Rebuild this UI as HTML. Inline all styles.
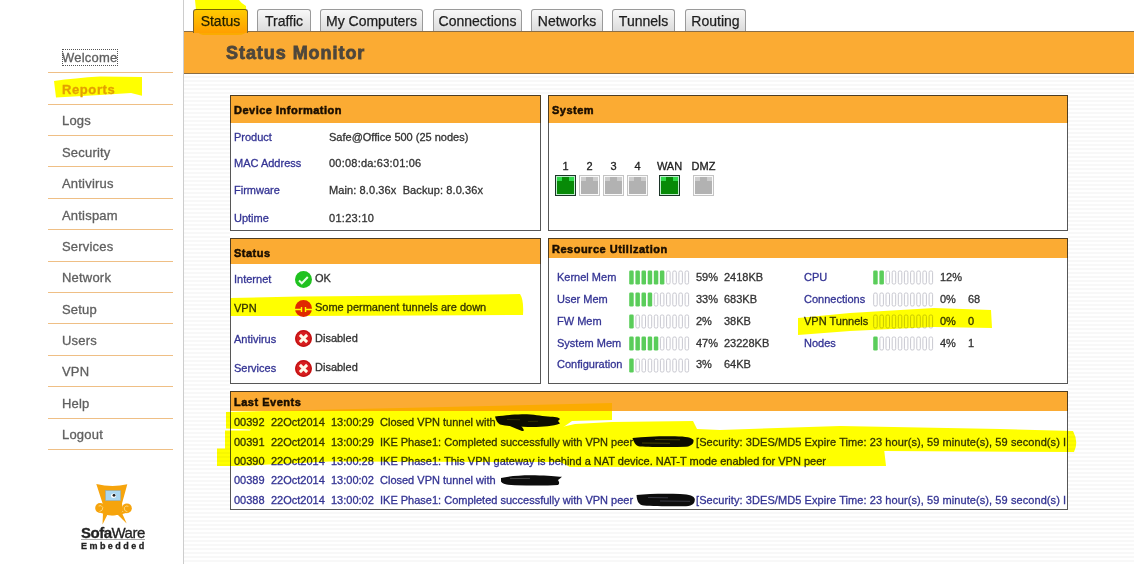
<!DOCTYPE html>
<html><head><meta charset="utf-8">
<style>
*{margin:0;padding:0;box-sizing:border-box}
html,body{width:1134px;height:573px;overflow:hidden;background:#fff;font-family:"Liberation Sans",sans-serif}
.a{position:absolute;white-space:pre;line-height:13px}
.tab{position:absolute;top:9px;height:22px;border:1px solid #9a9a9a;border-bottom:none;border-radius:3px 3px 0 0;background:linear-gradient(#f8f8f8,#dcdcdc)}
.nav{position:absolute;left:62px;font-size:13px;color:#606060;line-height:15px;white-space:pre;letter-spacing:0.2px;-webkit-text-stroke:0.3px currentColor}
.hl{position:absolute;left:48px;width:125px;height:1px;background:#efbf85}
.box{position:absolute;border:1px solid #575757;background:#fff}
.hd{position:absolute;background:#fbab33;box-sizing:border-box}
.h{position:absolute;white-space:pre;font-weight:bold;font-size:11px;color:#1a0e00;line-height:13px;letter-spacing:0.5px;-webkit-text-stroke:0.5px #1a0e00}
.lb{position:absolute;white-space:pre;font-size:11px;color:#343494;line-height:13px;-webkit-text-stroke:0.3px currentColor}
.vl{position:absolute;white-space:pre;font-size:11px;color:#333333;line-height:13px;-webkit-text-stroke:0.3px currentColor}
.mul{position:absolute;left:0;top:0;mix-blend-mode:multiply}
</style></head><body>

<div style="position:absolute;left:183px;top:0;width:1px;height:564px;background:#cdcdcd"></div>
<div style="position:absolute;left:184px;top:74px;width:950px;height:490px;background:repeating-linear-gradient(to bottom,#fff 0px,#fff 2px,#f8f8f8 2px,#f8f8f8 4px)"></div>
<div style="position:absolute;left:184px;top:31px;width:950px;height:43px;background:#fbab33;border-top:1px solid #8a6d45;border-bottom:1px solid #8a6d45"></div>
<div class="tab" style="left:193px;width:55px;height:24px;border-color:#7a6530;background:linear-gradient(#ffcb00,#ff9f00)"></div>
<div class="a" style="left:193px;top:14px;width:55px;text-align:center;font-size:14px;line-height:14px;color:#1e1e1e;-webkit-text-stroke:0.25px currentColor">Status</div>
<div class="tab" style="left:257px;width:54px"></div>
<div class="a" style="left:257px;top:14px;width:54px;text-align:center;font-size:14px;line-height:14px;color:#1e1e1e;-webkit-text-stroke:0.25px currentColor">Traffic</div>
<div class="tab" style="left:320px;width:103px"></div>
<div class="a" style="left:320px;top:14px;width:103px;text-align:center;font-size:14px;line-height:14px;color:#1e1e1e;-webkit-text-stroke:0.25px currentColor">My Computers</div>
<div class="tab" style="left:433px;width:89px"></div>
<div class="a" style="left:433px;top:14px;width:89px;text-align:center;font-size:14px;line-height:14px;color:#1e1e1e;-webkit-text-stroke:0.25px currentColor">Connections</div>
<div class="tab" style="left:531px;width:72px"></div>
<div class="a" style="left:531px;top:14px;width:72px;text-align:center;font-size:14px;line-height:14px;color:#1e1e1e;-webkit-text-stroke:0.25px currentColor">Networks</div>
<div class="tab" style="left:612px;width:63px"></div>
<div class="a" style="left:612px;top:14px;width:63px;text-align:center;font-size:14px;line-height:14px;color:#1e1e1e;-webkit-text-stroke:0.25px currentColor">Tunnels</div>
<div class="tab" style="left:685px;width:61px"></div>
<div class="a" style="left:685px;top:14px;width:61px;text-align:center;font-size:14px;line-height:14px;color:#1e1e1e;-webkit-text-stroke:0.25px currentColor">Routing</div>
<div class="a" style="left:226px;top:44px;font-size:18px;line-height:18px;font-weight:bold;color:#4e473c;letter-spacing:0.95px;-webkit-text-stroke:0.8px #4e473c">Status Monitor</div>
<div class="nav" style="top:50px;">Welcome</div>
<div class="hl" style="top:72px"></div>
<div class="nav" style="top:82px;font-weight:bold;color:#e3a000;letter-spacing:0.6px;">Reports</div>
<div class="hl" style="top:104px"></div>
<div class="nav" style="top:113px;">Logs</div>
<div class="hl" style="top:135px"></div>
<div class="nav" style="top:145px;">Security</div>
<div class="hl" style="top:166px"></div>
<div class="nav" style="top:176px;">Antivirus</div>
<div class="hl" style="top:198px"></div>
<div class="nav" style="top:208px;">Antispam</div>
<div class="hl" style="top:229px"></div>
<div class="nav" style="top:239px;">Services</div>
<div class="hl" style="top:261px"></div>
<div class="nav" style="top:270px;">Network</div>
<div class="hl" style="top:292px"></div>
<div class="nav" style="top:302px;">Setup</div>
<div class="hl" style="top:323px"></div>
<div class="nav" style="top:333px;">Users</div>
<div class="hl" style="top:355px"></div>
<div class="nav" style="top:364px;">VPN</div>
<div class="hl" style="top:386px"></div>
<div class="nav" style="top:396px;">Help</div>
<div class="hl" style="top:418px"></div>
<div class="nav" style="top:427px;">Logout</div>
<div class="hl" style="top:449px"></div>
<div style="position:absolute;left:62px;top:49px;width:56px;height:17px;border:1px dotted #555"></div>
<svg style="position:absolute;left:80px;top:482px" width="68" height="70" viewBox="0 0 68 70">
<path d="M16.3 1.9 Q31.8 6 47.3 2.3 L42 21.5 L43 29 Q39 33.5 32 33.5 Q25 33.5 21.5 29 L22.6 21.5 Z" fill="#f6a40c"/>
<circle cx="20.1" cy="26" r="4.9" fill="#f6a40c"/>
<circle cx="46.9" cy="26.3" r="4.9" fill="#f6a40c"/>
<path d="M20 28 Q33 35 47 28 L46 31 Q33 35.5 21 31 Z" fill="#f6a40c"/>
<path d="M18.6 24 Q21.5 22.5 22.8 25.5 Q23 29 19.5 29.5" stroke="#ffd67a" stroke-width="1" fill="none"/>
<path d="M48.4 24.3 Q45.5 22.8 44.2 25.8 Q44 29.3 47.5 29.8" stroke="#ffd67a" stroke-width="1" fill="none"/>
<path d="M23 31 L27.5 32.5 L22.5 42.5 Z" fill="#f6a40c"/>
<path d="M37.5 32.5 L42 31 L46.7 41.5 Z" fill="#f6a40c"/>
<rect x="25.5" y="8.6" width="15.1" height="10" fill="#a9d6ef" stroke="#8aa8b8" stroke-width="0.5"/>
<ellipse cx="33.5" cy="13.7" rx="2.6" ry="2.2" fill="#fff"/>
<circle cx="34" cy="13.3" r="1.4" fill="#1a1a1a"/>
</svg>
<div class="a" style="left:81px;top:525px;font-size:15px;line-height:15px;font-weight:bold;color:#222;letter-spacing:-0.5px;-webkit-text-stroke:0.3px #222">Sofa<span style="font-weight:normal">Ware</span></div>
<div style="position:absolute;left:81px;top:539px;width:64px;height:1px;background:#aaa"></div>
<div class="a" style="left:81px;top:542px;font-size:9px;line-height:9px;font-weight:bold;color:#222;letter-spacing:2.45px;-webkit-text-stroke:0.3px #222">Embedded</div>
<div style="position:absolute;left:230px;top:95px;width:838px;height:415px;background:#fff"></div>
<div class="box" style="left:230px;top:95px;width:311px;height:136px"></div>
<div class="hd" style="left:230px;top:95px;width:311px;height:28px;border:1px solid #4e3d22;border-bottom:none"></div>
<div class="h" style="left:234px;top:104px">Device Information</div>
<div class="box" style="left:548px;top:95px;width:520px;height:136px"></div>
<div class="hd" style="left:548px;top:95px;width:520px;height:28px;border:1px solid #4e3d22;border-bottom:none"></div>
<div class="h" style="left:552px;top:104px">System</div>
<div class="box" style="left:230px;top:238px;width:311px;height:146px"></div>
<div class="hd" style="left:230px;top:238px;width:311px;height:26px;border:1px solid #4e3d22;border-bottom:none"></div>
<div class="h" style="left:234px;top:247px">Status</div>
<div class="box" style="left:548px;top:238px;width:520px;height:146px"></div>
<div class="hd" style="left:548px;top:238px;width:520px;height:20px;border:1px solid #4e3d22;border-bottom:none"></div>
<div class="h" style="left:552px;top:243px">Resource Utilization</div>
<div class="box" style="left:230px;top:391px;width:838px;height:119px"></div>
<div class="hd" style="left:230px;top:391px;width:838px;height:20px;border:1px solid #4e3d22;border-bottom:none"></div>
<div class="h" style="left:234px;top:396px">Last Events</div>
<div class="lb" style="left:234px;top:131px">Product</div>
<div class="vl" style="left:329px;top:131px;letter-spacing:0.00px">Safe@Office 500 (25 nodes)</div>
<div class="lb" style="left:234px;top:157px">MAC Address</div>
<div class="vl" style="left:329px;top:157px;letter-spacing:0.22px">00:08:da:63:01:06</div>
<div class="lb" style="left:234px;top:184px">Firmware</div>
<div class="vl" style="left:329px;top:184px;letter-spacing:0.10px">Main: 8.0.36x  Backup: 8.0.36x</div>
<div class="lb" style="left:234px;top:212px">Uptime</div>
<div class="vl" style="left:329px;top:212px;letter-spacing:0.30px">01:23:10</div>
<svg style="position:absolute;left:555px;top:175px" width="21" height="21"><rect x="0.5" y="0.5" width="20" height="20" fill="#bfeecc" stroke="#1c3428"/><rect x="2" y="2" width="17" height="17" fill="#078a07"/><rect x="2" y="2" width="5" height="4" fill="#2fd84a"/><rect x="14" y="2" width="5" height="4" fill="#2fd84a"/></svg>
<div class="vl" style="left:555px;top:160px;width:21px;text-align:center;color:#222">1</div>
<svg style="position:absolute;left:579px;top:175px" width="21" height="21"><rect x="0.5" y="0.5" width="20" height="20" fill="#fafafa" stroke="#c4c4c4"/><rect x="2" y="2" width="17" height="17" fill="#b2b2b2"/><rect x="2" y="2" width="5" height="4" fill="#cdcdcd"/><rect x="14" y="2" width="5" height="4" fill="#cdcdcd"/></svg>
<div class="vl" style="left:579px;top:160px;width:21px;text-align:center;color:#222">2</div>
<svg style="position:absolute;left:603px;top:175px" width="21" height="21"><rect x="0.5" y="0.5" width="20" height="20" fill="#fafafa" stroke="#c4c4c4"/><rect x="2" y="2" width="17" height="17" fill="#b2b2b2"/><rect x="2" y="2" width="5" height="4" fill="#cdcdcd"/><rect x="14" y="2" width="5" height="4" fill="#cdcdcd"/></svg>
<div class="vl" style="left:603px;top:160px;width:21px;text-align:center;color:#222">3</div>
<svg style="position:absolute;left:627px;top:175px" width="21" height="21"><rect x="0.5" y="0.5" width="20" height="20" fill="#fafafa" stroke="#c4c4c4"/><rect x="2" y="2" width="17" height="17" fill="#b2b2b2"/><rect x="2" y="2" width="5" height="4" fill="#cdcdcd"/><rect x="14" y="2" width="5" height="4" fill="#cdcdcd"/></svg>
<div class="vl" style="left:627px;top:160px;width:21px;text-align:center;color:#222">4</div>
<svg style="position:absolute;left:659px;top:175px" width="21" height="21"><rect x="0.5" y="0.5" width="20" height="20" fill="#bfeecc" stroke="#1c3428"/><rect x="2" y="2" width="17" height="17" fill="#078a07"/><rect x="2" y="2" width="5" height="4" fill="#2fd84a"/><rect x="14" y="2" width="5" height="4" fill="#2fd84a"/></svg>
<div class="vl" style="left:659px;top:160px;width:21px;text-align:center;color:#222;display:flex;justify-content:center;overflow:visible"><span>WAN</span></div>
<svg style="position:absolute;left:693px;top:175px" width="21" height="21"><rect x="0.5" y="0.5" width="20" height="20" fill="#fafafa" stroke="#c4c4c4"/><rect x="2" y="2" width="17" height="17" fill="#b2b2b2"/><rect x="2" y="2" width="5" height="4" fill="#cdcdcd"/><rect x="14" y="2" width="5" height="4" fill="#cdcdcd"/></svg>
<div class="vl" style="left:693px;top:160px;width:21px;text-align:center;color:#222;display:flex;justify-content:center;overflow:visible"><span>DMZ</span></div>
<div class="lb" style="left:234px;top:273px">Internet</div>
<svg style="position:absolute;left:295px;top:271px" width="18" height="18"><circle cx="8.5" cy="8.5" r="8.5" fill="#1fc21f"/><path d="M4 9.5 L6.8 12.3 L12.8 6" stroke="#e8ffe8" stroke-width="2" fill="none"/></svg>
<div class="vl" style="left:315px;top:272px">OK</div>
<div class="lb" style="left:234px;top:302px">VPN</div>
<svg style="position:absolute;left:295px;top:300px" width="18" height="18"><circle cx="8.5" cy="8.5" r="8.5" fill="#e02808"/><path d="M0 9.5 H6.5 M10.5 9.5 H17 M6.5 7 V12 M10.5 7 V12" stroke="#fff" stroke-width="1.4" fill="none"/></svg>
<div class="vl" style="left:315px;top:301px">Some permanent tunnels are down</div>
<div class="lb" style="left:234px;top:333px">Antivirus</div>
<svg style="position:absolute;left:295px;top:330px" width="18" height="18"><circle cx="8.5" cy="8.5" r="8.5" fill="#d81e1e"/><circle cx="8.5" cy="8.5" r="7.6" fill="none" stroke="#b81010" stroke-width="1"/><path d="M4.9 4.9 L12.1 12.1 M12.1 4.9 L4.9 12.1" stroke="#fffbe8" stroke-width="2.9" fill="none"/></svg>
<div class="vl" style="left:315px;top:332px">Disabled</div>
<div class="lb" style="left:234px;top:362px">Services</div>
<svg style="position:absolute;left:295px;top:360px" width="18" height="18"><circle cx="8.5" cy="8.5" r="8.5" fill="#d81e1e"/><circle cx="8.5" cy="8.5" r="7.6" fill="none" stroke="#b81010" stroke-width="1"/><path d="M4.9 4.9 L12.1 12.1 M12.1 4.9 L4.9 12.1" stroke="#fffbe8" stroke-width="2.9" fill="none"/></svg>
<div class="vl" style="left:315px;top:361px">Disabled</div>
<div class="lb" style="left:557px;top:271px">Kernel Mem</div>
<svg style="position:absolute;left:629px;top:270px" width="62" height="15"><rect x="0.2" y="0.5" width="4.5" height="14" rx="1.3" fill="#5acd5a"/><rect x="6.4" y="0.5" width="4.5" height="14" rx="1.3" fill="#5acd5a"/><rect x="12.5" y="0.5" width="4.5" height="14" rx="1.3" fill="#5acd5a"/><rect x="18.7" y="0.5" width="4.5" height="14" rx="1.3" fill="#5acd5a"/><rect x="24.8" y="0.5" width="4.5" height="14" rx="1.3" fill="#5acd5a"/><rect x="30.9" y="0.5" width="4.5" height="14" rx="1.3" fill="#5acd5a"/><rect x="37.6" y="1" width="3.5" height="13" rx="1.3" fill="#fff" stroke="#c8c8d0" stroke-width="1"/><rect x="43.8" y="1" width="3.5" height="13" rx="1.3" fill="#fff" stroke="#c8c8d0" stroke-width="1"/><rect x="49.9" y="1" width="3.5" height="13" rx="1.3" fill="#fff" stroke="#c8c8d0" stroke-width="1"/><rect x="56.1" y="1" width="3.5" height="13" rx="1.3" fill="#fff" stroke="#c8c8d0" stroke-width="1"/></svg>
<div class="vl" style="left:696px;top:271px">59%</div>
<div class="vl" style="left:724px;top:271px">2418KB</div>
<div class="lb" style="left:804px;top:271px">CPU</div>
<svg style="position:absolute;left:873px;top:270px" width="62" height="15"><rect x="0.2" y="0.5" width="4.5" height="14" rx="1.3" fill="#5acd5a"/><rect x="6.4" y="0.5" width="4.5" height="14" rx="1.3" fill="#5acd5a"/><rect x="13.0" y="1" width="3.5" height="13" rx="1.3" fill="#fff" stroke="#c8c8d0" stroke-width="1"/><rect x="19.2" y="1" width="3.5" height="13" rx="1.3" fill="#fff" stroke="#c8c8d0" stroke-width="1"/><rect x="25.3" y="1" width="3.5" height="13" rx="1.3" fill="#fff" stroke="#c8c8d0" stroke-width="1"/><rect x="31.4" y="1" width="3.5" height="13" rx="1.3" fill="#fff" stroke="#c8c8d0" stroke-width="1"/><rect x="37.6" y="1" width="3.5" height="13" rx="1.3" fill="#fff" stroke="#c8c8d0" stroke-width="1"/><rect x="43.8" y="1" width="3.5" height="13" rx="1.3" fill="#fff" stroke="#c8c8d0" stroke-width="1"/><rect x="49.9" y="1" width="3.5" height="13" rx="1.3" fill="#fff" stroke="#c8c8d0" stroke-width="1"/><rect x="56.1" y="1" width="3.5" height="13" rx="1.3" fill="#fff" stroke="#c8c8d0" stroke-width="1"/></svg>
<div class="vl" style="left:940px;top:271px">12%</div>
<div class="lb" style="left:557px;top:293px">User Mem</div>
<svg style="position:absolute;left:629px;top:292px" width="62" height="15"><rect x="0.2" y="0.5" width="4.5" height="14" rx="1.3" fill="#5acd5a"/><rect x="6.4" y="0.5" width="4.5" height="14" rx="1.3" fill="#5acd5a"/><rect x="12.5" y="0.5" width="4.5" height="14" rx="1.3" fill="#5acd5a"/><rect x="18.7" y="0.5" width="4.5" height="14" rx="1.3" fill="#5acd5a"/><rect x="25.3" y="1" width="3.5" height="13" rx="1.3" fill="#fff" stroke="#c8c8d0" stroke-width="1"/><rect x="31.4" y="1" width="3.5" height="13" rx="1.3" fill="#fff" stroke="#c8c8d0" stroke-width="1"/><rect x="37.6" y="1" width="3.5" height="13" rx="1.3" fill="#fff" stroke="#c8c8d0" stroke-width="1"/><rect x="43.8" y="1" width="3.5" height="13" rx="1.3" fill="#fff" stroke="#c8c8d0" stroke-width="1"/><rect x="49.9" y="1" width="3.5" height="13" rx="1.3" fill="#fff" stroke="#c8c8d0" stroke-width="1"/><rect x="56.1" y="1" width="3.5" height="13" rx="1.3" fill="#fff" stroke="#c8c8d0" stroke-width="1"/></svg>
<div class="vl" style="left:696px;top:293px">33%</div>
<div class="vl" style="left:724px;top:293px">683KB</div>
<div class="lb" style="left:804px;top:293px">Connections</div>
<svg style="position:absolute;left:873px;top:292px" width="62" height="15"><rect x="0.7" y="1" width="3.5" height="13" rx="1.3" fill="#fff" stroke="#c8c8d0" stroke-width="1"/><rect x="6.9" y="1" width="3.5" height="13" rx="1.3" fill="#fff" stroke="#c8c8d0" stroke-width="1"/><rect x="13.0" y="1" width="3.5" height="13" rx="1.3" fill="#fff" stroke="#c8c8d0" stroke-width="1"/><rect x="19.2" y="1" width="3.5" height="13" rx="1.3" fill="#fff" stroke="#c8c8d0" stroke-width="1"/><rect x="25.3" y="1" width="3.5" height="13" rx="1.3" fill="#fff" stroke="#c8c8d0" stroke-width="1"/><rect x="31.4" y="1" width="3.5" height="13" rx="1.3" fill="#fff" stroke="#c8c8d0" stroke-width="1"/><rect x="37.6" y="1" width="3.5" height="13" rx="1.3" fill="#fff" stroke="#c8c8d0" stroke-width="1"/><rect x="43.8" y="1" width="3.5" height="13" rx="1.3" fill="#fff" stroke="#c8c8d0" stroke-width="1"/><rect x="49.9" y="1" width="3.5" height="13" rx="1.3" fill="#fff" stroke="#c8c8d0" stroke-width="1"/><rect x="56.1" y="1" width="3.5" height="13" rx="1.3" fill="#fff" stroke="#c8c8d0" stroke-width="1"/></svg>
<div class="vl" style="left:940px;top:293px">0%</div>
<div class="vl" style="left:968px;top:293px">68</div>
<div class="lb" style="left:557px;top:315px">FW Mem</div>
<svg style="position:absolute;left:629px;top:314px" width="62" height="15"><rect x="0.2" y="0.5" width="4.5" height="14" rx="1.3" fill="#5acd5a"/><rect x="6.9" y="1" width="3.5" height="13" rx="1.3" fill="#fff" stroke="#c8c8d0" stroke-width="1"/><rect x="13.0" y="1" width="3.5" height="13" rx="1.3" fill="#fff" stroke="#c8c8d0" stroke-width="1"/><rect x="19.2" y="1" width="3.5" height="13" rx="1.3" fill="#fff" stroke="#c8c8d0" stroke-width="1"/><rect x="25.3" y="1" width="3.5" height="13" rx="1.3" fill="#fff" stroke="#c8c8d0" stroke-width="1"/><rect x="31.4" y="1" width="3.5" height="13" rx="1.3" fill="#fff" stroke="#c8c8d0" stroke-width="1"/><rect x="37.6" y="1" width="3.5" height="13" rx="1.3" fill="#fff" stroke="#c8c8d0" stroke-width="1"/><rect x="43.8" y="1" width="3.5" height="13" rx="1.3" fill="#fff" stroke="#c8c8d0" stroke-width="1"/><rect x="49.9" y="1" width="3.5" height="13" rx="1.3" fill="#fff" stroke="#c8c8d0" stroke-width="1"/><rect x="56.1" y="1" width="3.5" height="13" rx="1.3" fill="#fff" stroke="#c8c8d0" stroke-width="1"/></svg>
<div class="vl" style="left:696px;top:315px">2%</div>
<div class="vl" style="left:724px;top:315px">38KB</div>
<div class="lb" style="left:804px;top:315px">VPN Tunnels</div>
<svg style="position:absolute;left:873px;top:314px" width="62" height="15"><rect x="0.7" y="1" width="3.5" height="13" rx="1.3" fill="#fff" stroke="#c8c8d0" stroke-width="1"/><rect x="6.9" y="1" width="3.5" height="13" rx="1.3" fill="#fff" stroke="#c8c8d0" stroke-width="1"/><rect x="13.0" y="1" width="3.5" height="13" rx="1.3" fill="#fff" stroke="#c8c8d0" stroke-width="1"/><rect x="19.2" y="1" width="3.5" height="13" rx="1.3" fill="#fff" stroke="#c8c8d0" stroke-width="1"/><rect x="25.3" y="1" width="3.5" height="13" rx="1.3" fill="#fff" stroke="#c8c8d0" stroke-width="1"/><rect x="31.4" y="1" width="3.5" height="13" rx="1.3" fill="#fff" stroke="#c8c8d0" stroke-width="1"/><rect x="37.6" y="1" width="3.5" height="13" rx="1.3" fill="#fff" stroke="#c8c8d0" stroke-width="1"/><rect x="43.8" y="1" width="3.5" height="13" rx="1.3" fill="#fff" stroke="#c8c8d0" stroke-width="1"/><rect x="49.9" y="1" width="3.5" height="13" rx="1.3" fill="#fff" stroke="#c8c8d0" stroke-width="1"/><rect x="56.1" y="1" width="3.5" height="13" rx="1.3" fill="#fff" stroke="#c8c8d0" stroke-width="1"/></svg>
<div class="vl" style="left:940px;top:315px">0%</div>
<div class="vl" style="left:968px;top:315px">0</div>
<div class="lb" style="left:557px;top:337px">System Mem</div>
<svg style="position:absolute;left:629px;top:336px" width="62" height="15"><rect x="0.2" y="0.5" width="4.5" height="14" rx="1.3" fill="#5acd5a"/><rect x="6.4" y="0.5" width="4.5" height="14" rx="1.3" fill="#5acd5a"/><rect x="12.5" y="0.5" width="4.5" height="14" rx="1.3" fill="#5acd5a"/><rect x="18.7" y="0.5" width="4.5" height="14" rx="1.3" fill="#5acd5a"/><rect x="24.8" y="0.5" width="4.5" height="14" rx="1.3" fill="#5acd5a"/><rect x="31.4" y="1" width="3.5" height="13" rx="1.3" fill="#fff" stroke="#c8c8d0" stroke-width="1"/><rect x="37.6" y="1" width="3.5" height="13" rx="1.3" fill="#fff" stroke="#c8c8d0" stroke-width="1"/><rect x="43.8" y="1" width="3.5" height="13" rx="1.3" fill="#fff" stroke="#c8c8d0" stroke-width="1"/><rect x="49.9" y="1" width="3.5" height="13" rx="1.3" fill="#fff" stroke="#c8c8d0" stroke-width="1"/><rect x="56.1" y="1" width="3.5" height="13" rx="1.3" fill="#fff" stroke="#c8c8d0" stroke-width="1"/></svg>
<div class="vl" style="left:696px;top:337px">47%</div>
<div class="vl" style="left:724px;top:337px">23228KB</div>
<div class="lb" style="left:804px;top:337px">Nodes</div>
<svg style="position:absolute;left:873px;top:336px" width="62" height="15"><rect x="0.2" y="0.5" width="4.5" height="14" rx="1.3" fill="#5acd5a"/><rect x="6.9" y="1" width="3.5" height="13" rx="1.3" fill="#fff" stroke="#c8c8d0" stroke-width="1"/><rect x="13.0" y="1" width="3.5" height="13" rx="1.3" fill="#fff" stroke="#c8c8d0" stroke-width="1"/><rect x="19.2" y="1" width="3.5" height="13" rx="1.3" fill="#fff" stroke="#c8c8d0" stroke-width="1"/><rect x="25.3" y="1" width="3.5" height="13" rx="1.3" fill="#fff" stroke="#c8c8d0" stroke-width="1"/><rect x="31.4" y="1" width="3.5" height="13" rx="1.3" fill="#fff" stroke="#c8c8d0" stroke-width="1"/><rect x="37.6" y="1" width="3.5" height="13" rx="1.3" fill="#fff" stroke="#c8c8d0" stroke-width="1"/><rect x="43.8" y="1" width="3.5" height="13" rx="1.3" fill="#fff" stroke="#c8c8d0" stroke-width="1"/><rect x="49.9" y="1" width="3.5" height="13" rx="1.3" fill="#fff" stroke="#c8c8d0" stroke-width="1"/><rect x="56.1" y="1" width="3.5" height="13" rx="1.3" fill="#fff" stroke="#c8c8d0" stroke-width="1"/></svg>
<div class="vl" style="left:940px;top:337px">4%</div>
<div class="vl" style="left:968px;top:337px">1</div>
<div class="lb" style="left:557px;top:358px">Configuration</div>
<svg style="position:absolute;left:629px;top:358px" width="62" height="15"><rect x="0.2" y="0.5" width="4.5" height="14" rx="1.3" fill="#5acd5a"/><rect x="6.9" y="1" width="3.5" height="13" rx="1.3" fill="#fff" stroke="#c8c8d0" stroke-width="1"/><rect x="13.0" y="1" width="3.5" height="13" rx="1.3" fill="#fff" stroke="#c8c8d0" stroke-width="1"/><rect x="19.2" y="1" width="3.5" height="13" rx="1.3" fill="#fff" stroke="#c8c8d0" stroke-width="1"/><rect x="25.3" y="1" width="3.5" height="13" rx="1.3" fill="#fff" stroke="#c8c8d0" stroke-width="1"/><rect x="31.4" y="1" width="3.5" height="13" rx="1.3" fill="#fff" stroke="#c8c8d0" stroke-width="1"/><rect x="37.6" y="1" width="3.5" height="13" rx="1.3" fill="#fff" stroke="#c8c8d0" stroke-width="1"/><rect x="43.8" y="1" width="3.5" height="13" rx="1.3" fill="#fff" stroke="#c8c8d0" stroke-width="1"/><rect x="49.9" y="1" width="3.5" height="13" rx="1.3" fill="#fff" stroke="#c8c8d0" stroke-width="1"/><rect x="56.1" y="1" width="3.5" height="13" rx="1.3" fill="#fff" stroke="#c8c8d0" stroke-width="1"/></svg>
<div class="vl" style="left:696px;top:358px">3%</div>
<div class="vl" style="left:724px;top:358px">64KB</div>
<div style="position:absolute;left:231px;top:411px;width:836px;height:98px;overflow:hidden">
<div class="lb" style="left:3px;top:5px">00392</div>
<div class="lb" style="left:40px;top:5px">22Oct2014</div>
<div class="lb" style="left:100px;top:5px">13:00:29</div>
<div class="lb" style="left:149px;top:5px">Closed VPN tunnel with</div>
<div class="lb" style="left:3px;top:25px">00391</div>
<div class="lb" style="left:40px;top:25px">22Oct2014</div>
<div class="lb" style="left:100px;top:25px">13:00:29</div>
<div class="lb" style="left:149px;top:25px">IKE Phase1: Completed successfully with VPN peer</div>
<div class="lb" style="left:465px;top:25px;letter-spacing:0.08px">[Security: 3DES/MD5 Expire Time: 23 hour(s), 59 minute(s), 59 second(s) I</div>
<div class="lb" style="left:3px;top:44px">00390</div>
<div class="lb" style="left:40px;top:44px">22Oct2014</div>
<div class="lb" style="left:100px;top:44px">13:00:28</div>
<div class="lb" style="left:149px;top:44px">IKE Phase1: This VPN gateway is behind a NAT device. NAT-T mode enabled for VPN peer</div>
<div class="lb" style="left:3px;top:63px">00389</div>
<div class="lb" style="left:40px;top:63px">22Oct2014</div>
<div class="lb" style="left:100px;top:63px">13:00:02</div>
<div class="lb" style="left:149px;top:63px">Closed VPN tunnel with</div>
<div class="lb" style="left:3px;top:83px">00388</div>
<div class="lb" style="left:40px;top:83px">22Oct2014</div>
<div class="lb" style="left:100px;top:83px">13:00:02</div>
<div class="lb" style="left:149px;top:83px">IKE Phase1: Completed successfully with VPN peer</div>
<div class="lb" style="left:465px;top:83px;letter-spacing:0.08px">[Security: 3DES/MD5 Expire Time: 23 hour(s), 59 minute(s), 59 second(s) I</div>
</div>
<svg style="position:absolute;left:0;top:0" width="1134" height="573">
<path d="M495 416.5 C505 415.5 512 414.6 522 414.3 C534 414.2 540 416 548 416.6 C555 417 559 417.5 560 419 L558 421 L560 423.5 C552 426.5 540 427.3 528 427 C518 426.8 508 426.3 500 424.5 C497 423 496 420 495 416.5 Z" fill="#0d0d0d"/>
<path d="M503 423 C510 426 516 428.5 522 431 C525 431.5 524 429 521 426 Z" fill="#0d0d0d"/>
<path d="M507 419.5 L520 419.8 M528 421.5 L538 421.3" stroke="#3a3a10" stroke-width="0.7"/>
<path d="M501 478 C510 476 520 475 535 475.2 C548 475.5 556 476.5 562 476.8 L560 478.5 L558 480 C559 482 560 483.5 558 485 C545 485.8 530 485.6 515 485.2 C507 485 502 484 501 481.5 Z" fill="#0d0d0d"/>
<path d="M510 478.6 L530 478.4" stroke="#666" stroke-width="0.6"/>
<path d="M632.5 438 C645 436.5 660 436 675 436.2 C686 436.5 692 437.5 693.5 440 C694 443 692 446 686 446.8 C670 447.3 650 447 640 446.5 C636 446 634 443 632.5 438 Z" fill="#0d0d0d"/>
<path d="M655 439.5 L680 439.8 M642 443 L670 443.3" stroke="#666655" stroke-width="0.6"/>
<path d="M636.5 495 C648 493.8 665 493.5 680 494 C690 494.5 694 496 694.8 499 C695 503 693 505.8 686 506.2 C670 506.5 652 506 644 505.5 C639 505 637 502 636.5 495 Z" fill="#0d0d0d"/>
<path d="M648 497.5 L668 497.8 M660 501 L690 501.3" stroke="#556" stroke-width="0.6"/>
</svg>
<svg class="mul" width="1134" height="573" viewBox="0 0 1134 573" style="position:absolute;left:0;top:0;mix-blend-mode:multiply">
<path d="M195 0 L239 0 Q241 3 246 6 L247 30 Q246 35 238 35 L203 35 Q197 34 197 28 L196 10 Z" fill="#ffff00"/>
<path d="M54 81 Q75 78 100 76.5 L142 77 L142 95.8 L131 93 L100 95 L56 97.6 Z" fill="#ffff00"/>
<path d="M230.5 298 L300 296.5 L420 295.5 L520 294 Q524 300 523 315 L420 315.5 L300 316 L230.5 316 Z" fill="#ffff00"/>
<path d="M798 318 L850 313 L934 308 L991 310 L992 328 L934 327 L850 331 L798 335 Z" fill="#ffff00"/>
<path d="M226 412 L400 408 L612 403 L612 420 L572 421 L560 429.5 L250 429.5 L226 428.5 Z" fill="#ffff00"/>
<path d="M225 430.5 L250 430.5 L252 428.5 L555 428.5 L575 424 L612 422 L693 421 L697 429 L720 430 L840 426 L1000 429 L1073 431 Q1079 442 1074 452 L884 451 L225 450 Z" fill="#ffff00"/>
<path d="M217 448.5 L884 448.5 L886 466 L570 467 L560 462 L330 461.5 L240 466 L217 466 Z" fill="#ffff00"/>
</svg>
</body></html>
